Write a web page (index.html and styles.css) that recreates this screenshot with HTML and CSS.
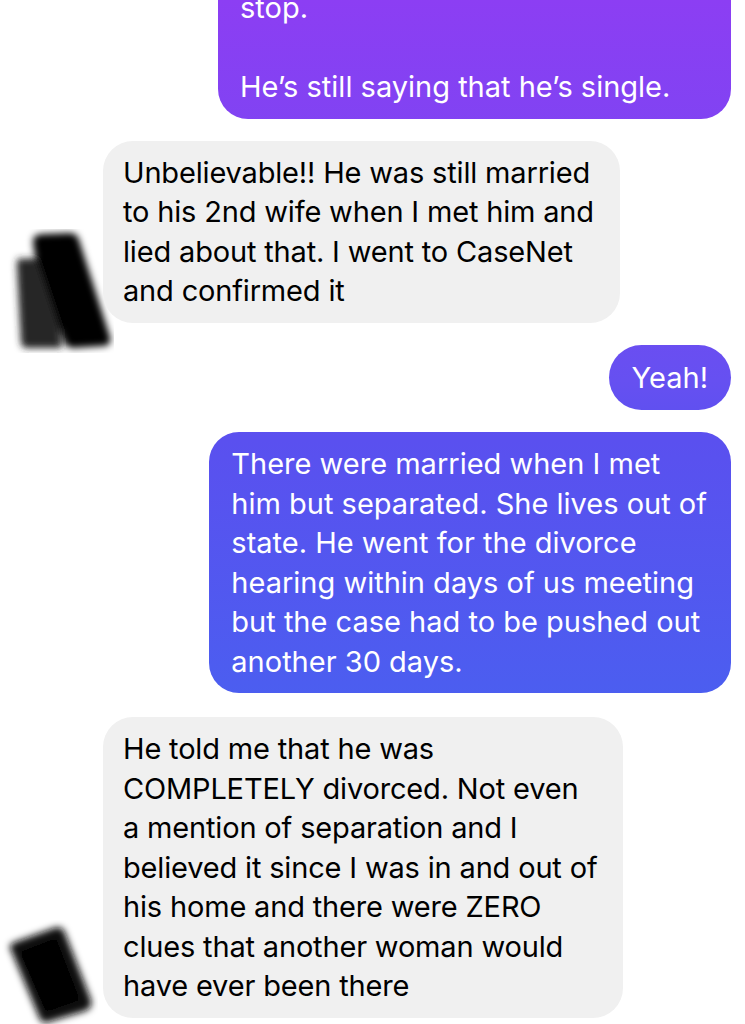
FILE: index.html
```html
<!DOCTYPE html>
<html lang="en">
<head>
<meta charset="utf-8">
<title>Chat</title>
<link rel="stylesheet" href="styles.css">
</head>
<body>
<main class="chat">
  <div class="row sent">
    <div class="bubble out cut">stop.<br><br>He’s still saying that he’s single.</div>
  </div>

  <div class="row received r1">
    <div class="avatar">
      <svg width="114" height="124" viewBox="0 0 114 124" aria-hidden="true">
        <defs>
          <filter id="blurA" x="-20%" y="-20%" width="140%" height="140%">
            <feGaussianBlur stdDeviation="3.5"/>
          </filter>
        </defs>
        <g filter="url(#blurA)">
          <path d="M22 30 Q16 27 17 38 L21 114 Q22 120 30 119 L62 119 L52 28 Z" fill="#262626"/>
          <path d="M33 10 Q35 5 44 5 L70 4 Q77 4 79 11 L110 108 Q112 116 104 117 L73 119 Q66 119 64 112 L34 22 Z" fill="#050505"/>
          <path d="M36 16 L70 12 L99 104 L74 112 Z" fill="#000"/>
        </g>
      </svg>
    </div>
    <div class="bubble in">Unbelievable!! He was still married<br>to his 2nd wife when I met him and<br>lied about that. I went to CaseNet<br>and confirmed it</div>
  </div>

  <div class="row sent">
    <div class="bubble out single">Yeah!</div>
  </div>

  <div class="row sent">
    <div class="bubble out">There were married when I met<br>him but separated. She lives out of<br>state. He went for the divorce<br>hearing within days of us meeting<br>but the case had to be pushed out<br>another 30 days.</div>
  </div>

  <div class="row received r2">
    <div class="avatar">
      <svg width="100" height="104" viewBox="0 0 100 104" aria-hidden="true">
        <defs>
          <filter id="blurB" x="-20%" y="-20%" width="140%" height="140%">
            <feGaussianBlur stdDeviation="3.5"/>
          </filter>
        </defs>
        <g filter="url(#blurB)">
          <path d="M13 30 Q9 25 17 22 L56 8 Q64 5 67 13 L93 80 Q95 88 87 91 L50 102 Q43 104 41 97 Z" fill="#111"/>
          <path d="M22 32 L58 18 L82 80 L48 92 Z" fill="#000"/>
        </g>
      </svg>
    </div>
    <div class="bubble in">He told me that he was<br>COMPLETELY divorced. Not even<br>a mention of separation and I<br>believed it since I was in and out of<br>his home and there were ZERO<br>clues that another woman would<br>have ever been there</div>
  </div>
</main>
</body>
</html>
```

FILE: styles.css
```css
html, body {
  margin: 0;
  padding: 0;
  background: #ffffff;
}

body {
  width: 745px;
  height: 1024px;
  overflow: hidden;
  font-family: Inter, "Noto Sans", "Liberation Sans", sans-serif;
}

.chat {
  display: flex;
  flex-direction: column;
  gap: 22px;
  padding: 0 14px 0 0;
}

.row {
  display: flex;
  align-items: flex-end;
}

.row.sent {
  justify-content: flex-end;
}

.row.r2 {
  margin-top: 2px;
}

.bubble {
  font-size: 29px;
  line-height: 39.5px;
  white-space: nowrap;
  border-radius: 30px;
}

.bubble.out {
  color: #ffffff;
  padding: 12px 24px 12px 22px;
  background: linear-gradient(to bottom, #8c3ef3 0px, #7a46f2 200px, #6650f1 380px, #5a50ef 440px, #4b5ef0 700px) fixed;
}

.bubble.single {
  padding: 13px 23px 13px 23px;
  border-radius: 33px;
}

.bubble.in {
  color: #000000;
  background: #f0f0f0;
  letter-spacing: -0.17px;
  padding: 12px 26px 12px 20px;
}

.bubble.cut {
  padding-top: 40px;
  margin-top: -52px;
  min-width: 467px;
}

.avatar {
  width: 103px;
  flex: none;
  display: flex;
  align-items: flex-end;
}

.avatar svg {
  display: block;
}

.r1 .avatar svg {
  margin-bottom: -30px;
  margin-right: -11px;
}

.r2 .avatar svg {
  margin-bottom: -6px;
}

.r2 .avatar {
  margin-left: -2px;
  width: 105px;
}
```
